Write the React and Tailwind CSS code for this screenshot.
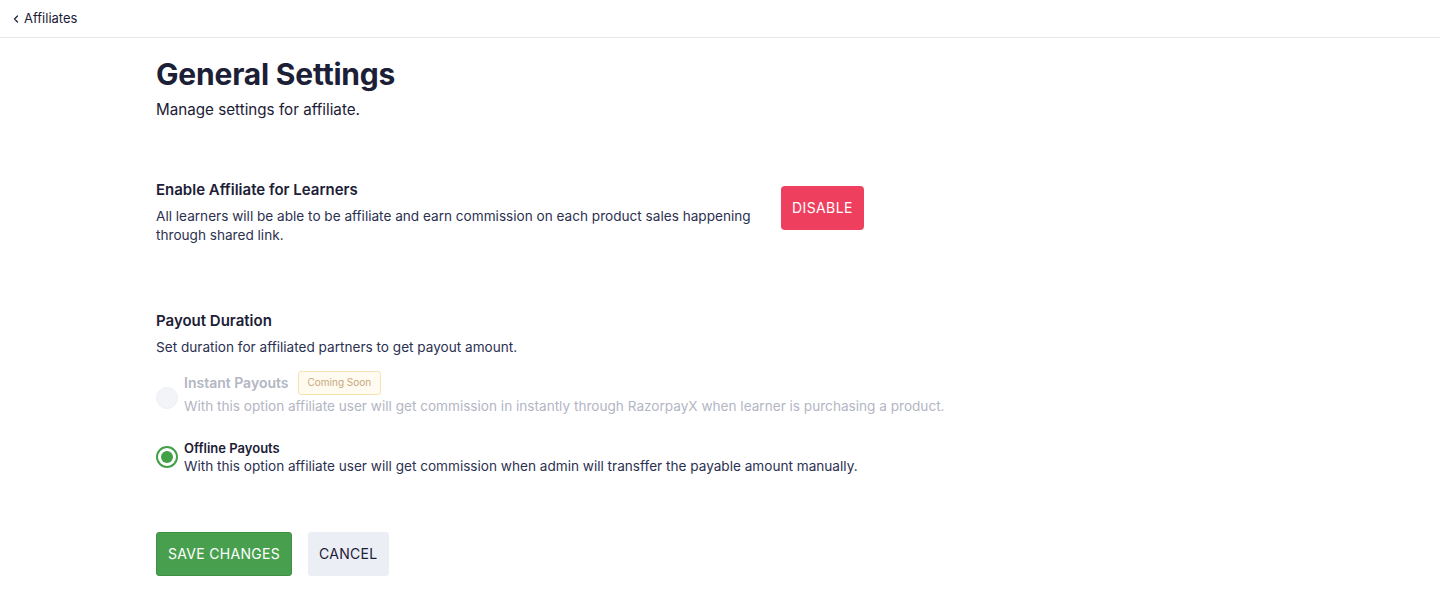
import { ChevronLeft } from 'lucide-react';

const font = { fontFamily: 'Inter, "Noto Sans", sans-serif' };

function Radio({ checked, disabled }) {
  if (disabled) {
    return <div className="w-[22px] h-[22px] rounded-full bg-[#f3f4f8] border border-[#eef0f5] shrink-0" />;
  }
  return (
    <div className="w-[22px] h-[22px] rounded-full border-2 border-[#43a047] flex items-center justify-center shrink-0 bg-white">
      {checked && <div className="w-[12px] h-[12px] rounded-full bg-[#43a047]" />}
    </div>
  );
}

export default function App() {
  return (
    <div className="min-h-screen bg-white text-[#1c2036]" style={font}>
      {/* Top bar */}
      <div className="h-[38px] border-b border-[#e5e7eb] flex items-center pl-[10px] gap-[2px]">
        <ChevronLeft size={12} strokeWidth={2.5} className="text-[#1c2036]" />
        <span className="text-[13px]">Affiliates</span>
      </div>

      <div className="pl-[156px] pt-[18px]">
        <h1 className="text-[30px] font-bold leading-[36px] tracking-[-0.2px]">General Settings</h1>
        <p className="text-[15.2px] mt-[7px]">Manage settings for affiliate.</p>

        {/* Enable affiliate */}
        <div className="flex items-start mt-[58px]">
          <div className="w-[625px]">
            <h2 className="text-[15px] font-semibold leading-[20px]">Enable Affiliate for Learners</h2>
            <p className="text-[13.6px] leading-[19px] mt-[7px] text-[#2b3050] w-[610px]">
              All learners will be able to be affiliate and earn commission on each product sales happening through shared link.
            </p>
          </div>
          <button className="h-[44px] px-[11px] rounded-[4px] bg-[#ef3f5f] text-white text-[14px] font-normal tracking-[0.4px] mt-[6px]">
            DISABLE
          </button>
        </div>

        {/* Payout */}
        <div className="mt-[66px]">
          <h2 className="text-[15px] font-semibold leading-[20px]">Payout Duration</h2>
          <p className="text-[13.6px] leading-[19px] mt-[7px] text-[#2b3050]">
            Set duration for affiliated partners to get payout amount.
          </p>

          <div className="flex items-center gap-[6px] mt-[14px]">
            <div className="pt-[10px]"><Radio disabled /></div>
            <div>
              <div className="flex items-center gap-[9px]">
                <span className="text-[14px] font-semibold text-[#b3b6c4]">Instant Payouts</span>
                <span className="text-[10px] text-[#c8a77c] bg-[#fffbf0] border border-[#f7e3b2] rounded-[3px] px-[9px] h-[24px] flex items-center">
                  Coming Soon
                </span>
              </div>
              <p className="text-[13.6px] leading-[19px] text-[#b3b6c4] mt-[2px]">
                With this option affiliate user will get commission in instantly through RazorpayX when learner is purchasing a product.
              </p>
            </div>
          </div>

          <div className="flex items-center gap-[6px] mt-[23px]">
            <Radio checked />
            <div>
              <div className="text-[13px] font-semibold leading-[18px]">Offline Payouts</div>
              <p className="text-[13.6px] leading-[19px] text-[#2b3050]">
                With this option affiliate user will get commission when admin will transffer the payable amount manually.
              </p>
            </div>
          </div>
        </div>

        {/* Actions */}
        <div className="flex gap-[16px] mt-[56px]">
          <button className="h-[44px] px-[11px] rounded-[3px] bg-[#48a04f] border border-[#3f8f45] text-white text-[14px] font-normal tracking-[0.3px]">
            SAVE CHANGES
          </button>
          <button className="h-[44px] px-[11px] rounded-[3px] bg-[#eceef6] text-[#1c2036] text-[14px] font-normal tracking-[0.3px]">
            CANCEL
          </button>
        </div>
      </div>
    </div>
  );
}
